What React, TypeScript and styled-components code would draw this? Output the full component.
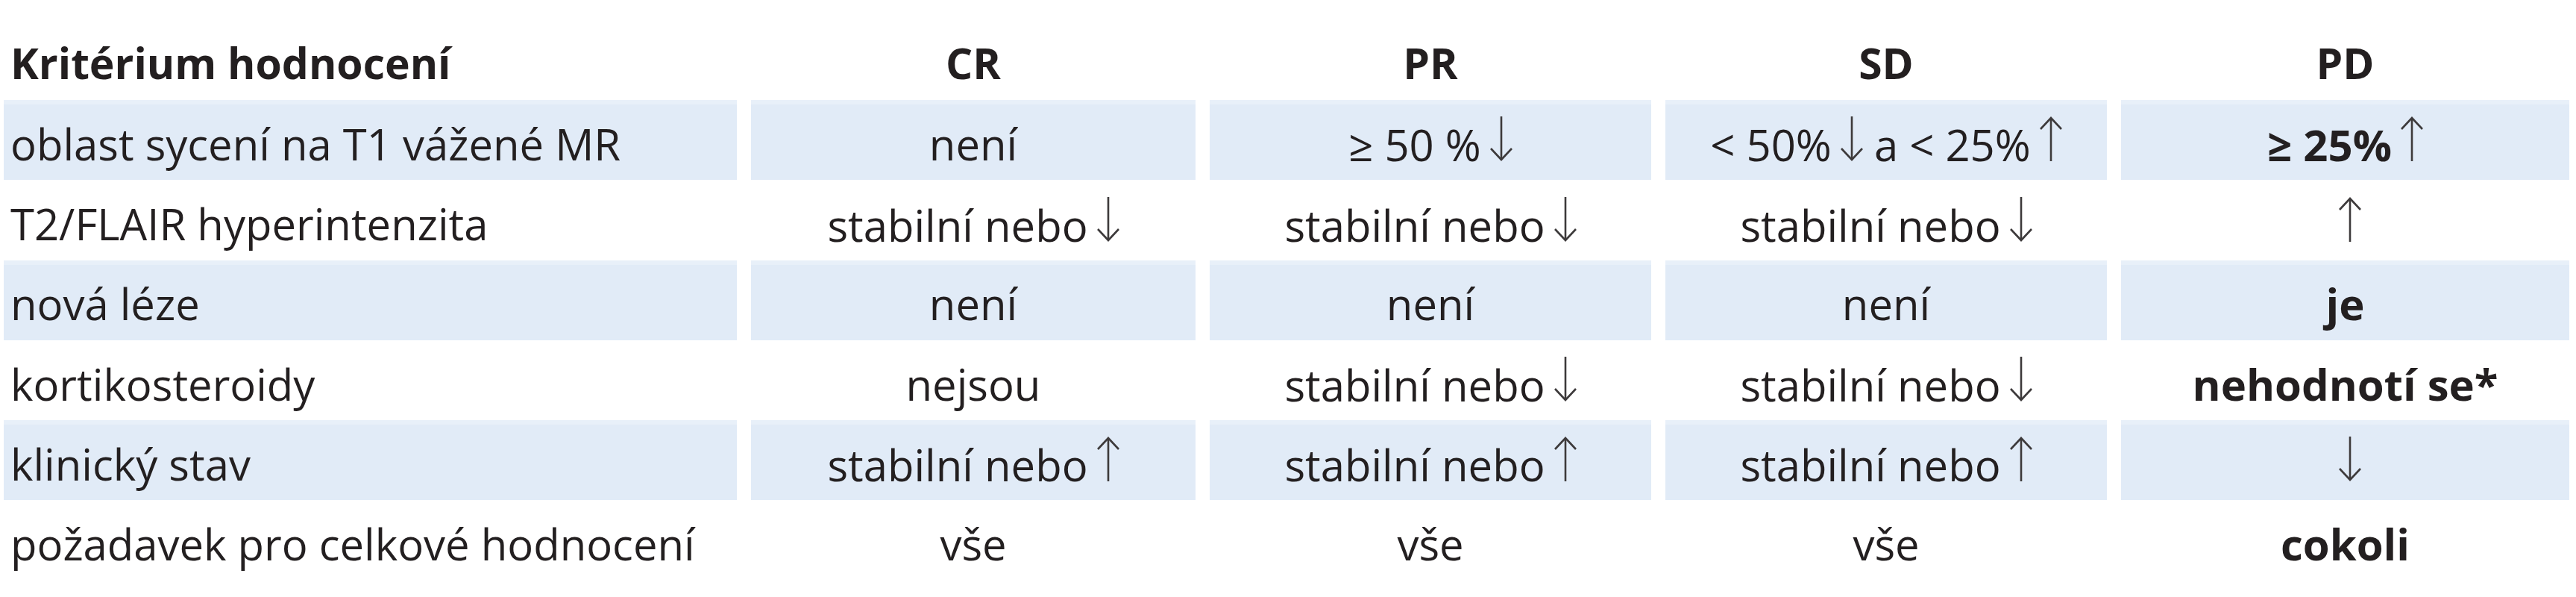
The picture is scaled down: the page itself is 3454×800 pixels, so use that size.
import React from 'react';
import styled, { createGlobalStyle } from 'styled-components';

const GlobalStyle = createGlobalStyle`
  html, body {
    margin: 0;
    padding: 0;
    background: #ffffff;
  }
  body {
    font-family: 'Open Sans', 'DejaVu Sans Condensed', sans-serif;
    font-stretch: 95%;
    color: #231f20;
  }
`;

const Page = styled.div`
  width: 3454px;
  height: 800px;
  padding-left: 5px;
  box-sizing: border-box;
  overflow: hidden;
`;

const Row = styled.div<{ $head?: boolean }>`
  display: grid;
  grid-template-columns: 983px 596px 592px 592px 601px;
  column-gap: 19px;
  height: ${(p) => (p.$head ? '134px' : '107.25px')};
`;

const Cell = styled.div<{ $shade?: boolean; $first?: boolean; $bold?: boolean; $head?: boolean }>`
  display: flex;
  align-items: ${(p) => (p.$head ? 'flex-end' : 'center')};
  justify-content: ${(p) => (p.$first ? 'flex-start' : 'center')};
  box-sizing: border-box;
  padding: ${(p) => (p.$head ? '0 0 16px' : '10px 0 0')};
  padding-left: ${(p) => (p.$first ? '9px' : '0')};
  background: ${(p) => (p.$shade ? '#e1ebf7' : 'transparent')};
  box-shadow: ${(p) => (p.$shade ? 'inset 0 6px 0 #e8f0f9' : 'none')};
  font-size: ${(p) => (p.$head ? '57px' : '58px')};
  font-weight: ${(p) => (p.$bold || p.$head ? 700 : 400)};
  line-height: 1.2;
  white-space: nowrap;
`;

const ArrowSvg = styled.svg`
  width: 30px;
  height: 60px;
  margin-left: 12px;
  vertical-align: baseline;
  overflow: visible;
`;

function Arrow({ dir }: { dir: 'up' | 'down' }) {
  return (
    <ArrowSvg viewBox="0 0 30 60" fill="none" stroke="#3d3a3b" strokeWidth={2.6}>
      {dir === 'up' ? (
        <>
          <line x1="15" y1="2" x2="15" y2="60" />
          <polyline points="1,17 15,2 29,17" />
        </>
      ) : (
        <>
          <line x1="15" y1="0" x2="15" y2="58" />
          <polyline points="1,43 15,58 29,43" />
        </>
      )}
    </ArrowSvg>
  );
}

const Normal = styled.span`
  font-weight: 400;
`;

type Val = React.ReactNode;

const up = <Arrow dir="up" />;
const down = <Arrow dir="down" />;

const rows: { label: string; cells: Val[]; pdBold?: boolean }[] = [
  {
    label: 'oblast sycení na T1  vážené MR',
    cells: [
      'není',
      <>≥ 50 %{down}</>,
      <>&lt; 50%{down} a &lt; 25%{up}</>,
      <>≥ 25%<Normal>{up}</Normal></>,
    ],
    pdBold: true,
  },
  {
    label: 'T2/FLAIR hyperintenzita',
    cells: [<>stabilní nebo{down}</>, <>stabilní nebo{down}</>, <>stabilní nebo{down}</>, <>{up}</>],
  },
  { label: 'nová léze', cells: ['není', 'není', 'není', 'je'], pdBold: true },
  {
    label: 'kortikosteroidy',
    cells: ['nejsou', <>stabilní nebo{down}</>, <>stabilní nebo{down}</>, 'nehodnotí se*'],
    pdBold: true,
  },
  {
    label: 'klinický stav',
    cells: [<>stabilní nebo{up}</>, <>stabilní nebo{up}</>, <>stabilní nebo{up}</>, <>{down}</>],
  },
  { label: 'požadavek pro celkové hodnocení', cells: ['vše', 'vše', 'vše', 'cokoli'], pdBold: true },
];

export default function App() {
  return (
    <>
      <GlobalStyle />
      <Page>
        <Row $head>
          <Cell $head $first>Kritérium hodnocení</Cell>
          <Cell $head>CR</Cell>
          <Cell $head>PR</Cell>
          <Cell $head>SD</Cell>
          <Cell $head>PD</Cell>
        </Row>
        {rows.map((r, i) => {
          const shade = i % 2 === 0;
          return (
            <Row key={r.label}>
              <Cell $first $shade={shade}>{r.label}</Cell>
              {r.cells.map((c, j) => (
                <Cell key={j} $shade={shade} $bold={j === 3 && r.pdBold}>
                  <span>{c}</span>
                </Cell>
              ))}
            </Row>
          );
        })}
      </Page>
    </>
  );
}
